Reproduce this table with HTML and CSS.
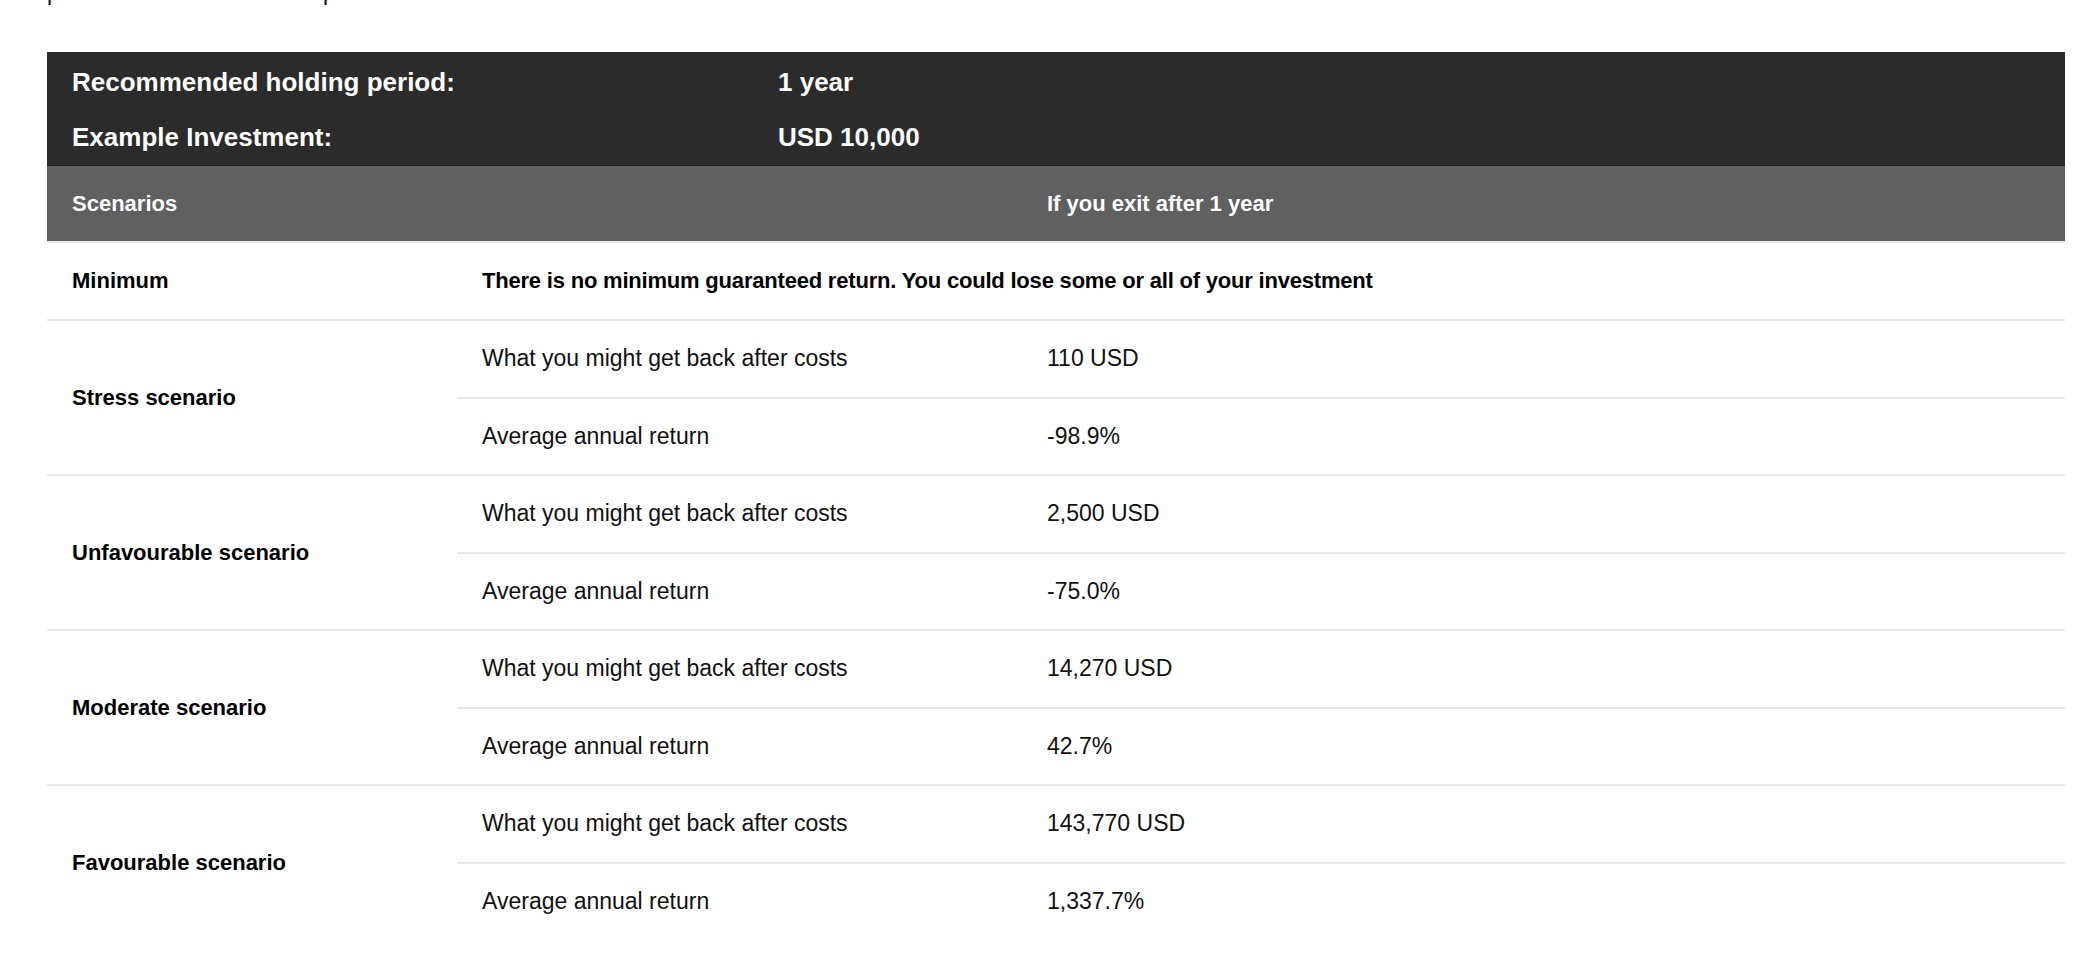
FILE: index.html
```html
<!DOCTYPE html>
<html lang="en">
<head>
<meta charset="utf-8">
<title>Performance scenarios</title>
<link rel="stylesheet" href="styles.css">
</head>
<body>
<div class="prior"><div class="prior-line"><span class="prior-a">performance</span><span class="prior-b">period</span></div></div>
<section class="kid">
  <div class="summary">
    <div class="summary-row">
      <div class="summary-label">Recommended holding period:</div>
      <div class="summary-value">1 year</div>
    </div>
    <div class="summary-row">
      <div class="summary-label">Example Investment:</div>
      <div class="summary-value">USD 10,000</div>
    </div>
  </div>
  <div class="scen">
    <div class="head head-wide">Scenarios</div>
    <div class="head">If you exit after 1 year</div>

    <div class="cell name">Minimum</div>
    <div class="cell name span2 tight">There is no minimum guaranteed return. You could lose some or all of your investment</div>

    <div class="cell name tall">Stress scenario</div>
    <div class="cell">What you might get back after costs</div>
    <div class="cell">110 USD</div>
    <div class="cell">Average annual return</div>
    <div class="cell">-98.9%</div>

    <div class="cell name tall">Unfavourable scenario</div>
    <div class="cell">What you might get back after costs</div>
    <div class="cell">2,500 USD</div>
    <div class="cell">Average annual return</div>
    <div class="cell">-75.0%</div>

    <div class="cell name tall">Moderate scenario</div>
    <div class="cell">What you might get back after costs</div>
    <div class="cell">14,270 USD</div>
    <div class="cell">Average annual return</div>
    <div class="cell">42.7%</div>

    <div class="cell name tall last">Favourable scenario</div>
    <div class="cell">What you might get back after costs</div>
    <div class="cell">143,770 USD</div>
    <div class="cell last">Average annual return</div>
    <div class="cell last">1,337.7%</div>
  </div>
</section>
</body>
</html>
```
FILE: styles.css
```css
html, body {
  margin: 0;
  padding: 0;
  background: #ffffff;
}
body {
  font-family: "Liberation Sans", Arial, sans-serif;
  color: #111111;
}
.prior {
  height: 8px;
  overflow: hidden;
  margin-left: 47px;
}
.prior-line {
  display: flex;
  margin-top: -19px;
  font-size: 23px;
  line-height: 23px;
}
.prior-a {
  width: 276px;
}
.kid {
  margin: 44px 0 0 47px;
  width: 2018px;
}
.summary {
  background: #2b2b2b;
  border-bottom: 1px solid #1f1f1f;
  padding-top: 3px;
  color: #ffffff;
}
.summary-row {
  display: grid;
  grid-template-columns: 706px 1fr;
  height: 55px;
  align-items: center;
  font-size: 26px;
  font-weight: 700;
}
.summary-label,
.summary-value {
  padding-left: 25px;
}
.scen {
  display: grid;
  grid-template-columns: 410px 565px 1fr;
  grid-auto-rows: 77.5px;
}
.head {
  background: #606060;
  color: #ffffff;
  font-size: 22px;
  font-weight: 700;
  display: flex;
  align-items: center;
  padding-left: 25px;
  border-bottom: 2px solid #e3e8eb;
  height: 77px;
  box-sizing: border-box;
}
.head-wide {
  grid-column: span 2;
}
.cell {
  display: flex;
  align-items: center;
  padding-left: 25px;
  font-size: 23px;
  border-bottom: 2px solid #e3e8eb;
  box-sizing: border-box;
  color: #111111;
}
.name {
  font-size: 22px;
  font-weight: 700;
  color: #000000;
}
.tight {
  letter-spacing: -0.2px;
}
.span2 {
  grid-column: span 2;
}
.tall {
  grid-row: span 2;
}
.last {
  border-bottom-color: transparent;
}
```
